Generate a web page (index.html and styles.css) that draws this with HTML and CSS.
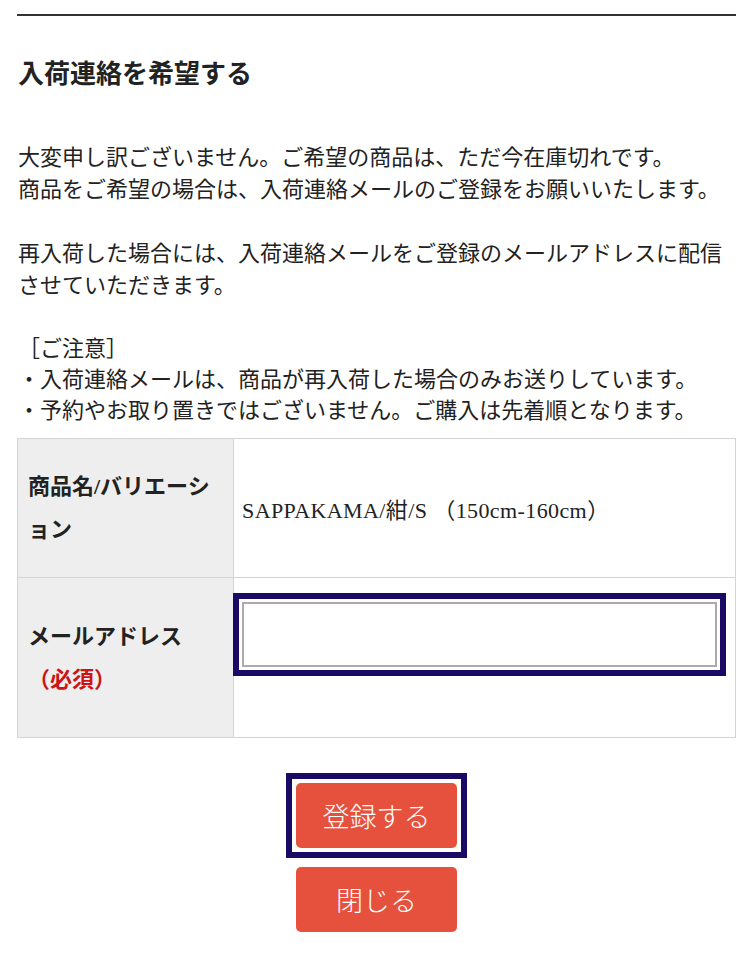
FILE: index.html
```html
<!DOCTYPE html>
<html lang="ja">
<head>
  <meta charset="UTF-8">
  <meta name="viewport" content="width=device-width, initial-scale=1">
  <title>入荷連絡を希望する</title>
  <link rel="stylesheet" href="styles.css">
</head>
<body>

  <div class="wrap">
    <hr class="rule">

    <h1>入荷連絡を希望する</h1>

    <!-- MESSAGE -->
    <p class="lead">
      大変申し訳ございません。ご希望の商品は、ただ今在庫切れです。<br>
      商品をご希望の場合は、入荷連絡メールのご登録をお願いいたします。<br>
      <br>
      再入荷した場合には、入荷連絡メールをご登録のメールアドレスに配信させていただきます。
    </p>

    <p class="notice">
      ［ご注意］<br>
      ・入荷連絡メールは、商品が再入荷した場合のみお送りしています。<br>
      ・予約やお取り置きではございません。ご購入は先着順となります。
    </p>

    <!-- FORM -->
    <table class="form-table">
      <tr>
        <th>商品名/バリエーション</th>
        <td class="item">SAPPAKAMA/紺/S （150cm-160cm）</td>
      </tr>
      <tr>
        <th>メールアドレス<br><span class="req">（必須）</span></th>
        <td class="field"><input type="email" class="mail-input focused"></td>
      </tr>
    </table>

    <div class="actions">
      <div class="focus-ring"><button class="btn">登録する</button></div>
      <button class="btn">閉じる</button>
    </div>
  </div>

</body>
</html>
```

FILE: styles.css
```css
body {
  margin: 0;
  background: #fff;
  color: #222;
  font-family: "Liberation Serif", "Noto Sans CJK JP", serif;
}
.wrap {
  padding: 14px 15px 0 17px;
}
.rule {
  margin: 0;
  border: none;
  height: 2px;
  background: #333;
}
h1 {
  font-size: 26px;
  font-weight: bold;
  line-height: 36px;
  margin: 41px 0 0 1px;
}
.lead {
  font-size: 22px;
  line-height: 32px;
  margin: 49px 0 0 1px;
}
.notice {
  font-size: 22px;
  line-height: 31px;
  margin: 31px 0 0 1px;
}
.form-table {
  width: 100%;
  margin-top: 12px;
  border-collapse: collapse;
}
.form-table th,
.form-table td {
  border: 1px solid #d4d4d4;
  vertical-align: middle;
}
.form-table th {
  width: 195px;
  background: #eee;
  text-align: left;
  font-size: 22px;
  line-height: 43px;
  padding: 26px 10px;
}
.form-table td.item {
  font-size: 22px;
  letter-spacing: 0.4px;
  padding: 0 10px 0 8px;
}
.form-table td.field {
  padding: 24px 18px 70px 8px;
}
.req { color: #cc1414; }
.mail-input {
  display: block;
  box-sizing: border-box;
  width: 100%;
  height: 65px;
  border: 2px solid #ababab;
  background: #fff;
  margin: 0;
}
.mail-input.focused {
  outline: 6px solid #1a0a66;
  outline-offset: 3px;
}
.actions {
  display: flex;
  flex-direction: column;
  align-items: center;
  gap: 19px;
  margin-top: 45px;
}
.focus-ring {
  display: flex;
  padding: 4px;
  border: 6px solid #1a0a66;
  margin: -10px 0;
}
.btn {
  width: 161px;
  height: 65px;
  border: none;
  border-radius: 5px;
  background: #e6513d;
  color: #fff;
  font-family: "Noto Sans CJK JP", sans-serif;
  font-size: 27px;
  font-weight: 300;
  cursor: pointer;
}
```
